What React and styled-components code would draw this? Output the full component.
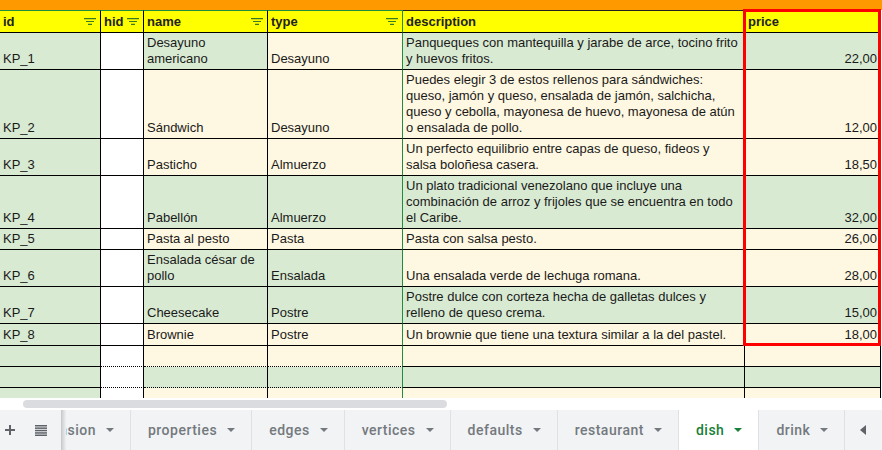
import React from 'react'
import styled, { createGlobalStyle } from 'styled-components'

const GREEN = '#d9ead3'
const CREAM = '#fef7e1'
const WHITE = '#ffffff'
const FILTER_EDGE = '#1e8e3e'

const colour = { G: GREEN, C: CREAM, W: WHITE }

const rows = [
    { h: 37, id: 'KP_1', name: 'Desayuno\namericano', type: 'Desayuno', desc: 'Panqueques con mantequilla y jarabe de arce, tocino frito\ny huevos fritos.', price: '22,00', bg: 'GCGG' },
    { h: 69, id: 'KP_2', name: 'Sándwich', type: 'Desayuno', desc: 'Puedes elegir 3 de estos rellenos para sándwiches:\nqueso, jamón y queso, ensalada de jamón, salchicha,\nqueso y cebolla, mayonesa de huevo, mayonesa de atún\no ensalada de pollo.', price: '12,00', bg: 'CCCC' },
    { h: 37, id: 'KP_3', name: 'Pasticho', type: 'Almuerzo', desc: 'Un perfecto equilibrio entre capas de queso, fideos y\nsalsa boloñesa casera.', price: '18,50', bg: 'CCCC' },
    { h: 53, id: 'KP_4', name: 'Pabellón', type: 'Almuerzo', desc: 'Un plato tradicional venezolano que incluye una\ncombinación de arroz y frijoles que se encuentra en todo\nel Caribe.', price: '32,00', bg: 'GGGG' },
    { h: 21, id: 'KP_5', name: 'Pasta al pesto', type: 'Pasta', desc: 'Pasta con salsa pesto.', price: '26,00', bg: 'CCCC' },
    { h: 37, id: 'KP_6', name: 'Ensalada césar de\npollo', type: 'Ensalada', desc: 'Una ensalada verde de lechuga romana.', price: '28,00', bg: 'GGCC' },
    { h: 37, id: 'KP_7', name: 'Cheesecake', type: 'Postre', desc: 'Postre dulce con corteza hecha de galletas dulces y\nrelleno de queso crema.', price: '15,00', bg: 'GGGG' },
    { h: 22, id: 'KP_8', name: 'Brownie', type: 'Postre', desc: 'Un brownie que tiene una textura similar a la del pastel.', price: '18,00', bg: 'CCCC' },
    { h: 21, id: '', name: '', type: '', desc: '', price: '', bg: 'CCCC', dotted: true },
    { h: 21, id: '', name: '', type: '', desc: '', price: '', bg: 'GGGG', dotted: true },
    { h: 21, id: '', name: '', type: '', desc: '', price: '', bg: 'CCCC' },
]

const tabs = [
    { name: 'dimension' },
    { name: 'properties' },
    { name: 'edges' },
    { name: 'vertices' },
    { name: 'defaults' },
    { name: 'restaurant' },
    { name: 'dish', active: true },
    { name: 'drink' },
]

const GlobalStyle = createGlobalStyle`
    body{
        margin: 0;
        background: #fff;
    }
`

const Page = styled.div`
    width: 882px;
    height: 450px;
    display: flex;
    flex-direction: column;
    overflow: hidden;
    font-family: "Liberation Sans", Arial, sans-serif;
`

const Canvas = styled.div`
    position: relative;
    flex: none;
    height: 398px;
    overflow: hidden;
`

const TopBar = styled.div`
    height: 10px;
    background: #ff9900;
`

const Row = styled.div`
    display: grid;
    grid-template-columns: 101px 43px 124px 135px 342px 136px;
    height: ${p => p.$h}px;
`

const Cell = styled.div`
    box-sizing: border-box;
    display: flex;
    align-items: flex-end;
    justify-content: ${p => p.$right ? 'flex-end' : 'flex-start'};
    padding: 0 3px 2px;
    background: ${p => p.$bg};
    border-right: 1px solid ${p => p.$edge || '#000'};
    border-bottom: 1px ${p => p.$dotted ? 'dotted' : 'solid'} #000;
    font-size: 13px;
    line-height: 16px;
    color: #1a1a1a;
    white-space: pre;
    overflow: hidden;
`

const HeaderCell = styled(Cell)`
    align-items: center;
    justify-content: space-between;
    padding: 0 4px 0 3px;
    background: #ffff00;
    border-top: 1px solid ${p => p.$top};
    font-weight: bold;
    color: #222;
`

const Selection = styled.div`
    position: absolute;
    left: 743px;
    top: 9px;
    width: 138px;
    height: 337px;
    box-sizing: border-box;
    border: 3px solid #ff0000;
    pointer-events: none;
`

const ScrollTrack = styled.div`
    flex: none;
    height: 12px;
    box-sizing: border-box;
    padding: 2px 0 0 23px;
    background: #fff;
`

const Thumb = styled.div`
    width: 424px;
    height: 8px;
    border-radius: 4px;
    background: #dadce0;
`

const TabBar = styled.div`
    flex: 1;
    display: flex;
    align-items: stretch;
    background: #f1f3f4;
    font-family: Roboto, "Liberation Sans", sans-serif;
`

const IconButton = styled.div`
    flex: none;
    width: ${p => p.$w}px;
    display: flex;
    align-items: center;
    justify-content: center;
`

const TabViewport = styled.div`
    position: relative;
    flex: 1;
    overflow: hidden;
    &::before{
        content: '';
        position: absolute;
        left: 0;
        top: 0;
        bottom: 0;
        width: 5px;
        background: linear-gradient(to right, #c4c6c8, #dfe1e3 60%, #eceeef);
        z-index: 1;
    }
`

const TabStrip = styled.div`
    display: flex;
    height: 100%;
    margin-left: -52px;
`

const Tab = styled.div`
    flex: none;
    display: flex;
    align-items: center;
    padding: 0 16px 0 17px;
    border-right: 1px solid #dfe1e4;
    background: ${p => p.$active ? '#fff' : 'transparent'};
    color: ${p => p.$active ? '#188038' : '#74797e'};
    font-size: 14px;
    font-weight: 500;
    letter-spacing: 0.5px;
    span{
        margin-right: 10px;
    }
`

const Nav = styled.div`
    flex: none;
    width: 34px;
    display: flex;
    align-items: center;
    padding-left: 12px;
    box-sizing: border-box;
`

const FilterIcon = () => (
    <svg width="12" height="7" viewBox="0 0 12 7">
        <g stroke="#3b7a23" strokeWidth="1.2">
            <path d="M0 0.6h12M2 3.5h8M4 6.4h4" />
        </g>
    </svg>
)

const Caret = ({ color }) => (
    <svg width="8" height="4" viewBox="0 0 8 4">
        <path d="M0 0h8L4 4z" fill={color} />
    </svg>
)

const headers = [
    { label: 'id', filter: true, top: FILTER_EDGE },
    { label: 'hid', filter: true, top: FILTER_EDGE },
    { label: 'name', filter: true, top: FILTER_EDGE },
    { label: 'type', filter: true, top: FILTER_EDGE, edge: FILTER_EDGE },
    { label: 'description', top: '#222' },
    { label: 'price', top: '#222' },
]

const App = () => {
    return (
        <Page>
            <GlobalStyle />
            <Canvas>
                <TopBar />
                <Row $h={23}>
                    {headers.map(h => (
                        <HeaderCell key={h.label} $top={h.top} $edge={h.edge}>
                            <span>{h.label}</span>
                            {h.filter && <FilterIcon />}
                        </HeaderCell>
                    ))}
                </Row>
                {rows.map((r, i) => (
                    <Row key={i} $h={r.h}>
                        <Cell $bg={GREEN}>{r.id}</Cell>
                        <Cell $bg={WHITE} $dotted={r.dotted}></Cell>
                        <Cell $bg={colour[r.bg[0]]} $dotted={r.dotted}>{r.name}</Cell>
                        <Cell $bg={colour[r.bg[1]]} $dotted={r.dotted} $edge={FILTER_EDGE}>{r.type}</Cell>
                        <Cell $bg={colour[r.bg[2]]}>{r.desc}</Cell>
                        <Cell $bg={colour[r.bg[3]]} $right>{r.price}</Cell>
                    </Row>
                ))}
                <Selection />
            </Canvas>
            <ScrollTrack>
                <Thumb />
            </ScrollTrack>
            <TabBar>
                <IconButton $w={20}>
                    <svg width="10" height="10" viewBox="0 0 10 10">
                        <path d="M5 0v10M0 5h10" stroke="#5f6368" strokeWidth="2" />
                    </svg>
                </IconButton>
                <IconButton $w={41}>
                    <svg width="12" height="11" viewBox="0 0 12 11" fill="#5f6368">
                        <rect x="0" y="0" width="12" height="1.5" />
                        <rect x="0" y="2.4" width="12" height="1.5" />
                        <rect x="0" y="4.8" width="12" height="1.5" />
                        <rect x="0" y="7.2" width="12" height="1.5" />
                        <rect x="0" y="9.5" width="12" height="1.5" />
                    </svg>
                </IconButton>
                <TabViewport>
                    <TabStrip>
                        {tabs.map(t => (
                            <Tab key={t.name} $active={t.active}>
                                <span>{t.name}</span>
                                <Caret color={t.active ? '#188038' : '#74797e'} />
                            </Tab>
                        ))}
                    </TabStrip>
                </TabViewport>
                <Nav>
                    <svg width="6" height="10" viewBox="0 0 6 10">
                        <path d="M6 0v10L0 5z" fill="#5f6368" />
                    </svg>
                </Nav>
            </TabBar>
        </Page>
    )
}

export default App
